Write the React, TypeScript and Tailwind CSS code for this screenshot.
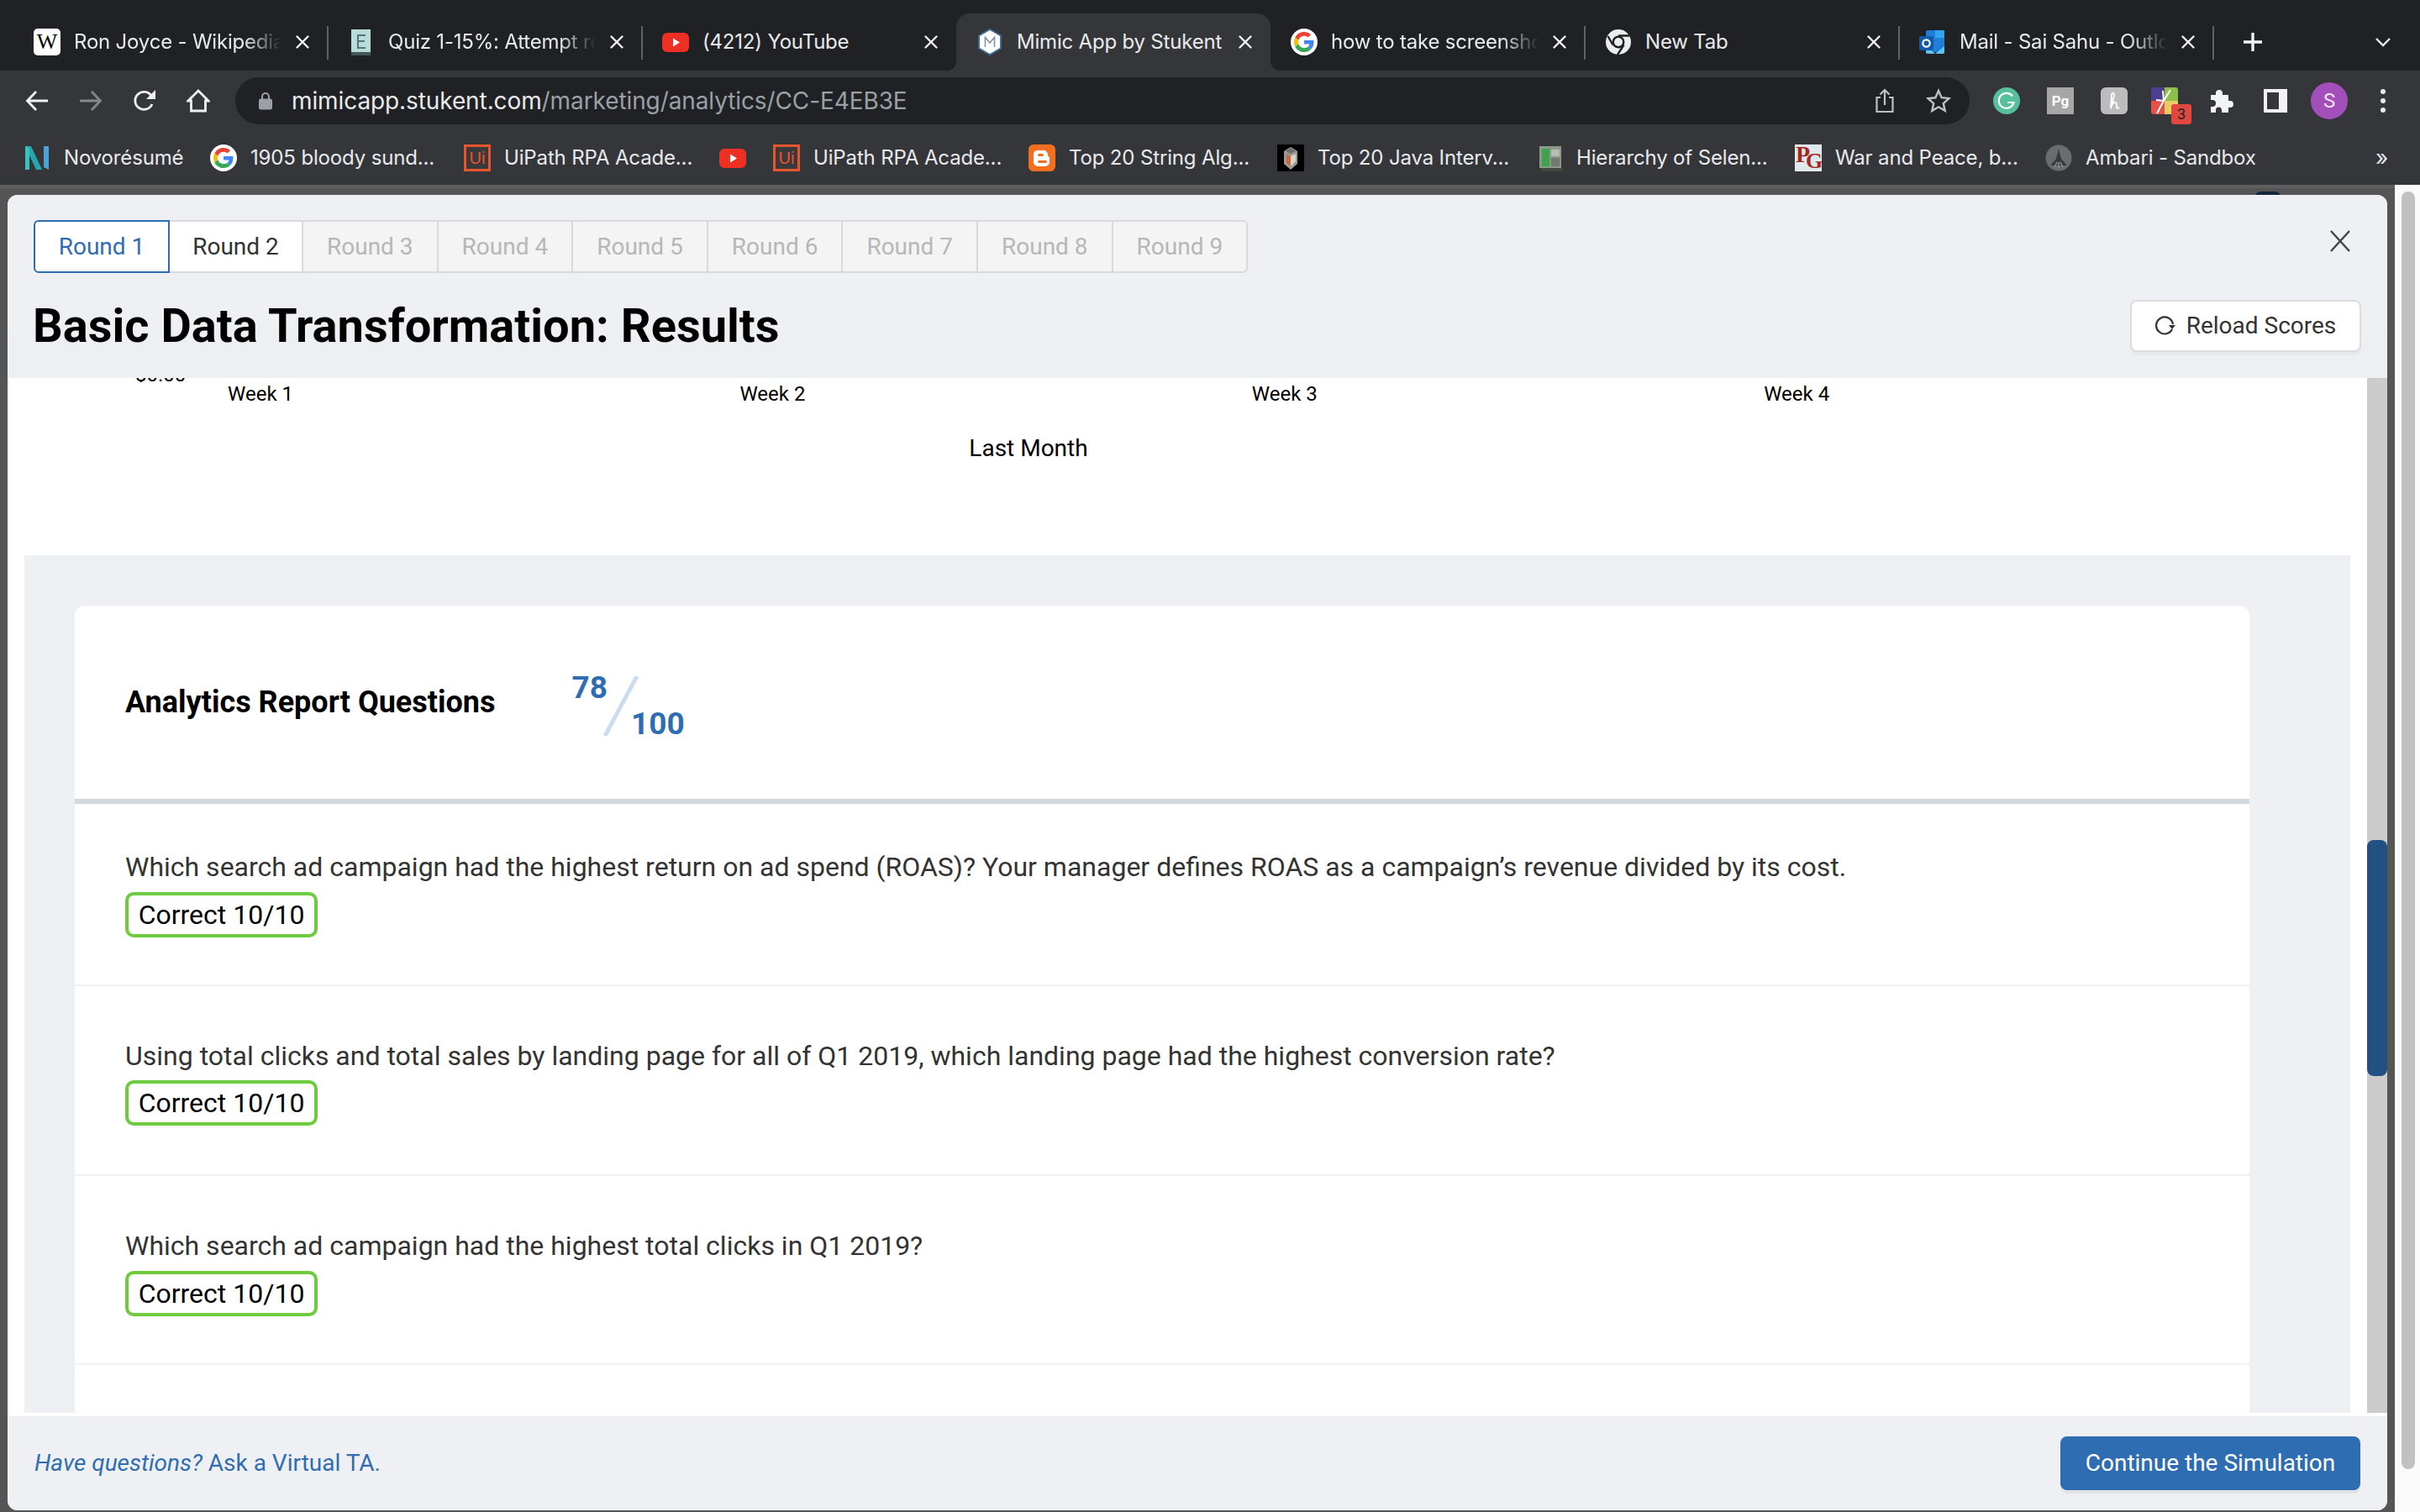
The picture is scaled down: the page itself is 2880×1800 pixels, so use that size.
import React from "react";

const GoogleG = ({ size = 24 }: { size?: number }) => (
  <svg width={size} height={size} viewBox="0 0 48 48">
    <path fill="#EA4335" d="M24 9.5c3.54 0 6.71 1.22 9.21 3.6l6.85-6.85C35.9 2.38 30.47 0 24 0 14.62 0 6.51 5.38 2.56 13.22l7.98 6.19C12.43 13.72 17.74 9.5 24 9.5z" />
    <path fill="#4285F4" d="M46.98 24.55c0-1.57-.15-3.09-.38-4.55H24v9.02h12.94c-.58 2.96-2.26 5.48-4.78 7.18l7.73 6c4.51-4.18 7.09-10.36 7.09-17.65z" />
    <path fill="#FBBC05" d="M10.53 28.59c-.48-1.45-.76-2.99-.76-4.59s.27-3.14.76-4.59l-7.98-6.19C.92 16.46 0 20.12 0 24c0 3.88.92 7.54 2.56 10.78l7.97-6.19z" />
    <path fill="#34A853" d="M24 48c6.48 0 11.93-2.13 15.89-5.81l-7.73-6c-2.15 1.45-4.92 2.3-8.16 2.3-6.26 0-11.57-4.22-13.47-9.91l-7.98 6.19C6.51 42.62 14.62 48 24 48z" />
  </svg>
);
const GoogleFav = () => (
  <div className="w-[32px] h-[32px] rounded-full bg-white flex items-center justify-center shrink-0"><GoogleG size={24} /></div>
);
const YouTubeFav = () => (
  <svg width="32" height="32" viewBox="0 0 32 32" className="shrink-0">
    <rect x="0" y="5" width="32" height="23" rx="6" fill="#ee3024" />
    <path d="M13 11.5l8 5-8 5z" fill="#fff" />
  </svg>
);
const WikiFav = () => (
  <div className="w-[32px] h-[32px] rounded-[5px] bg-white flex items-center justify-center shrink-0 text-black text-[26px] leading-none font-['Liberation_Serif',serif]">W</div>
);
const QuizFav = () => (
  <svg width="32" height="32" viewBox="0 0 32 32" className="shrink-0">
    <rect x="4" y="1" width="23" height="29" fill="#b9dcd9" />
    <rect x="4" y="28" width="23" height="4" fill="#44565a" />
    <path d="M11 7h10v2h-8v5h7v2h-7v6h8v2H11z" fill="#53757a" />
  </svg>
);
const MimicFav = () => (
  <svg width="30" height="32" viewBox="0 0 30 32" className="shrink-0">
    <path d="M15 1l13 7.5v15L15 31 2 23.5v-15z" fill="#fff" stroke="#3e6d92" strokeWidth="2" />
    <path d="M9.5 22V10.5L15 17l5.5-6.5V22" fill="none" stroke="#7f93a6" strokeWidth="1.6" />
  </svg>
);
const ChromeFav = () => (
  <svg width="32" height="32" viewBox="0 0 32 32" className="shrink-0">
    <circle cx="16" cy="16" r="15" fill="#eceded" />
    <circle cx="16" cy="16" r="7.5" fill="#202124" />
    <circle cx="16" cy="16" r="5" fill="#eceded" />
    <path d="M16 8.5h13M9.5 19.5L3.5 9M22.5 19.5L15 31" stroke="#202124" strokeWidth="2.4" />
  </svg>
);
const OutlookFav = () => (
  <svg width="32" height="32" viewBox="0 0 32 32" className="shrink-0">
    <rect x="8" y="2" width="22" height="26" rx="2" fill="#1f7fd6" />
    <path d="M19 2h11v9H19z" fill="#33a4ea" />
    <path d="M8 20l11 10 11-9v7a2 2 0 01-2 2H10a2 2 0 01-2-2z" fill="#60c3f5" />
    <rect x="0" y="9" width="17" height="17" rx="2" fill="#1258ac" />
    <circle cx="8.5" cy="17.5" r="4.2" fill="none" stroke="#fff" strokeWidth="2.2" />
  </svg>
);
const CloseX = ({ className = "" }: { className?: string }) => (
  <svg width="20" height="20" viewBox="0 0 20 20" className={"shrink-0 " + className}>
    <path d="M3.5 3.5l13 13M16.5 3.5l-13 13" stroke="#f1f3f4" strokeWidth="2.4" strokeLinecap="round" />
  </svg>
);

const tabs = [
  { t: "Ron Joyce - Wikipedia", i: <WikiFav />, fade: true, sep: true },
  { t: "Quiz 1-15%: Attempt review", i: <QuizFav />, fade: true, sep: true },
  { t: "(4212) YouTube", i: <YouTubeFav />, fade: false, sep: false },
  { t: "Mimic App by Stukent", i: <MimicFav />, fade: false, sep: false, active: true },
  { t: "how to take screenshot", i: <GoogleFav />, fade: true, sep: true },
  { t: "New Tab", i: <ChromeFav />, fade: false, sep: true },
  { t: "Mail - Sai Sahu - Outlook", i: <OutlookFav />, fade: true, sep: true },
];

const ChromeTab = ({ tab }: { tab: (typeof tabs)[number] }) => (
  <div className={"relative w-[374px] h-[68px] shrink-0 flex items-center pl-[24px] " + (tab.active ? "bg-[#35363a] rounded-t-[16px]" : "")}>
    {tab.active && (
      <>
        <span className="absolute bottom-0 left-[-12px] w-[12px] h-[12px] bg-[radial-gradient(circle_at_0_0,transparent_12px,#35363a_12.5px)]" />
        <span className="absolute bottom-0 right-[-12px] w-[12px] h-[12px] bg-[radial-gradient(circle_at_100%_0,transparent_12px,#35363a_12.5px)]" />
      </>
    )}
    <div className="w-[32px] flex justify-center shrink-0">{tab.i}</div>
    <div className={"ml-[16px] w-[247px] overflow-hidden whitespace-nowrap text-[#e8eaed] text-[24px] leading-[32px] font-['Inter',sans-serif] tracking-[-0.2px] " + (tab.fade ? "[mask-image:linear-gradient(to_right,black_82%,transparent_100%)]" : "")}>
      {tab.t}
    </div>
    <CloseX className="ml-[15px]" />
    {tab.sep && <span className="absolute right-[-1px] top-[15px] h-[40px] w-[2px] bg-[#5f6368]" />}
  </div>
);

const ToolBtn = ({ children }: { children: React.ReactNode }) => (
  <div className="w-[64px] h-[64px] shrink-0 flex items-center justify-center relative">{children}</div>
);

const UiFav = () => (
  <div className="w-[32px] h-[32px] border-[3px] border-[#e9552c] bg-[#3a3a3c] flex items-center justify-center shrink-0 text-[#e9552c] text-[20px] leading-none font-['Liberation_Sans',sans-serif]">Ui</div>
);
const Bm = ({ icon, text, cls }: { icon: React.ReactNode; text?: string; cls: string }) => (
  <div className={"flex items-center shrink-0 " + cls}>
    {icon}
    {text && <span className="ml-[16px] whitespace-nowrap text-[#e8eaed] text-[24px] leading-[32px] font-['Inter',sans-serif] tracking-[-0.15px]">{text}</span>}
  </div>
);

const NovoIcon = () => (
  <svg width="32" height="32" viewBox="0 0 32 32" className="shrink-0">
    <path d="M2 2h7l13 28h-7z" fill="#27a7ad" />
    <path d="M2 2l5 3v25H2z" fill="#39c3bf" />
    <path d="M24 2h6v28l-6-3z" fill="#4aa3d6" />
  </svg>
);
const BloggerFav = () => (
  <svg width="32" height="32" viewBox="0 0 32 32" className="shrink-0">
    <rect width="32" height="32" rx="6" fill="#f26f21" />
    <path d="M10 7h8a5 5 0 015 5v1a2 2 0 002 2v6a5 5 0 01-5 5h-9a5 5 0 01-5-5v-9a5 5 0 014-5z" fill="#fff" />
    <rect x="11" y="11" width="7" height="3" rx="1.5" fill="#f26f21" />
    <rect x="11" y="19" width="11" height="3" rx="1.5" fill="#f26f21" />
  </svg>
);
const JavaFav = () => (
  <svg width="32" height="32" viewBox="0 0 32 32" className="shrink-0">
    <rect width="32" height="32" fill="#000" />
    <path d="M16 3l8 5v15l-8 7-8-7V8z" fill="#9a9a98" />
    <path d="M11 11l5 3v12l-5-4z" fill="#c76a42" />
    <path d="M16 14l6-3v9l-6 6z" fill="#d8d4cc" />
    <path d="M16 4l6 4-6 3-6-3z" fill="#6f6f6d" />
  </svg>
);
const HierFav = () => (
  <svg width="30" height="32" viewBox="0 0 30 32" className="shrink-0">
    <rect x="2" y="2" width="26" height="26" fill="#8b9a88" />
    <rect x="5" y="5" width="9" height="21" fill="#3fa34d" />
    <rect x="16" y="6" width="10" height="8" fill="#b6bdb3" />
    <rect x="16" y="16" width="10" height="10" fill="#707a6f" />
    <rect x="4" y="28" width="26" height="4" fill="#44473f" />
  </svg>
);
const PgFav = () => (
  <div className="w-[32px] h-[32px] bg-[#dfe9ee] shrink-0 relative overflow-hidden font-['Liberation_Serif',serif] text-[#a3281f] font-bold">
    <span className="absolute left-[1px] top-[-3px] text-[28px] leading-[30px]">P</span>
    <span className="absolute left-[13px] top-[6px] text-[26px] leading-[28px]">G</span>
  </div>
);
const AmbariFav = () => (
  <svg width="32" height="32" viewBox="0 0 32 32" className="shrink-0">
    <circle cx="16" cy="16" r="15.5" fill="#6b6c6e" />
    <path d="M16 5l3 12 7 8H6l7-8z" fill="#38393b" />
    <path d="M11 27l3-6M16 28v-7M21 27l-3-6" stroke="#8d8e90" strokeWidth="1.6" />
  </svg>
);

const rounds = ["Round 1", "Round 2", "Round 3", "Round 4", "Round 5", "Round 6", "Round 7", "Round 8", "Round 9"];

const Badge = () => (
  <div className="w-[229px] h-[54px] border-[4px] border-[#6ecb3f] rounded-[10px] flex items-center justify-center text-black text-[32px] leading-none">
    Correct 10/10
  </div>
);

const Question = ({ text, cls, badgeCls }: { text: string; cls: string; badgeCls: string }) => (
  <div className={"border-b-[2px] border-[#f0f1f3] pl-[60px] " + cls}>
    <div className="text-[#333] text-[32px] leading-[44px] whitespace-nowrap">{text}</div>
    <div className={badgeCls}><Badge /></div>
  </div>
);

export default function App() {
  return (
    <div className="w-[2880px] h-[1800px] overflow-hidden flex flex-col bg-[#555] font-['Roboto',sans-serif]">
      {/* Tab strip */}
      <div className="h-[84px] shrink-0 bg-[#202124] flex items-end pl-[16px]">
        {tabs.map((t) => (
          <ChromeTab key={t.t} tab={t} />
        ))}
        <div className="h-[68px] flex items-center ml-[34px]">
          <svg width="26" height="26" viewBox="0 0 26 26"><path d="M13 2v22M2 13h22" stroke="#f1f3f4" strokeWidth="3.4" /></svg>
        </div>
        <div className="h-[68px] flex items-center ml-[132px]">
          <svg width="20" height="12" viewBox="0 0 20 12"><path d="M2 2l8 8 8-8" fill="none" stroke="#e8eaed" strokeWidth="2.4" /></svg>
        </div>
      </div>
      {/* Toolbar */}
      <div className="h-[72px] shrink-0 bg-[#35363a] flex items-center pl-[12px]">
        <ToolBtn>
          <svg width="28" height="28" viewBox="0 0 28 28"><path d="M27 14H3M13 3L2.5 14 13 25" fill="none" stroke="#eef0f1" strokeWidth="2.8" /></svg>
        </ToolBtn>
        <ToolBtn>
          <svg width="28" height="28" viewBox="0 0 28 28"><path d="M1 14h24M15 3l10.5 11L15 25" fill="none" stroke="#85878a" strokeWidth="2.8" /></svg>
        </ToolBtn>
        <ToolBtn>
          <svg width="28" height="28" viewBox="0 0 28 28"><path d="M23 18a10.5 10.5 0 11-.6-9.5" fill="none" stroke="#eef0f1" strokeWidth="2.8" /><path d="M27 1v11H16z" fill="#eef0f1" /></svg>
        </ToolBtn>
        <ToolBtn>
          <svg width="28" height="28" viewBox="0 0 28 28"><path d="M14 2L2 14h3.5v12h17V14H26z" fill="none" stroke="#eef0f1" strokeWidth="2.8" /></svg>
        </ToolBtn>
        <div className="ml-[12px] w-[2064px] h-[56px] rounded-full bg-[#202124] flex items-center pl-[28px] pr-[5px]">
          <svg width="16" height="22" viewBox="0 0 16 22" className="shrink-0"><path d="M4 9V6a4 4 0 018 0v3" fill="none" stroke="#9aa0a6" strokeWidth="2" /><rect y="8.5" width="16" height="13" rx="2.5" fill="#9aa0a6" /></svg>
          <div className="ml-[23px] flex-1 text-[28px] leading-[36px] whitespace-nowrap font-['Inter',sans-serif] tracking-[-0.1px] text-[#e8eaed]">
            mimicapp.stukent.com<span className="text-[#9aa0a6]">/marketing/analytics/CC-E4EB3E</span>
          </div>
          <div className="flex">
            <ToolBtn>
              <svg width="24" height="30" viewBox="0 0 24 30"><path d="M7 11H2.5v17h19V11H17M12 20V2M6.5 7.5L12 2l5.5 5.5" fill="none" stroke="#bdc1c6" strokeWidth="2.2" /></svg>
            </ToolBtn>
            <ToolBtn>
              <svg width="30" height="30" viewBox="0 0 30 30"><path d="M15 3l3.6 8.2 8.9.9-6.7 6 1.9 8.8L15 22.3 7.3 27l1.9-8.8-6.7-6 8.9-.9z" fill="none" stroke="#bdc1c6" strokeWidth="2.4" /></svg>
            </ToolBtn>
          </div>
        </div>
        <div className="ml-[12px] flex">
          <ToolBtn>
            <div className="w-[32px] h-[32px] rounded-full bg-[#56c09c] flex items-center justify-center">
              <svg width="22" height="22" viewBox="0 0 22 22"><path d="M18 5.5A9 9 0 1019.5 13H12" fill="none" stroke="#fff" strokeWidth="2.2" /></svg>
            </div>
          </ToolBtn>
          <ToolBtn>
            <div className="w-[32px] h-[32px] bg-[#a6a6a6] flex items-center justify-center text-white text-[17px] font-bold leading-none">Pg</div>
          </ToolBtn>
          <ToolBtn>
            <div className="w-[32px] h-[32px] rounded-[6px] bg-[#bcbcbc] flex items-center justify-center">
              <svg width="20" height="24" viewBox="0 0 20 24"><path d="M6 21c1-6 4-12 4-16 0-3-3-3-3 0 0 5-1 11-1 16 1-5 4-8 6-7s0 5 1 6 2 1 3 0" fill="none" stroke="#fff" strokeWidth="1.8" /></svg>
            </div>
          </ToolBtn>
          <ToolBtn>
            <div className="relative w-[32px] h-[32px] rounded-[3px] overflow-hidden left-[-4px]">
              <svg width="32" height="32" viewBox="0 0 32 32">
                <rect width="16" height="16" fill="#4d3f8f" />
                <rect x="16" width="16" height="16" fill="#8cc04b" />
                <rect y="16" width="16" height="16" fill="#e4524a" />
                <rect x="16" y="16" width="16" height="16" fill="#e9cd60" />
                <path d="M15 16L6 15M15 16l-1-12M15 16l8-13M15 16L7 31" stroke="#fff" strokeWidth="2" />
              </svg>
            </div>
            <div className="absolute left-[36px] top-[36px] w-[24px] h-[24px] rounded-[3px] bg-[#e0483f] flex items-center justify-center text-[#222] text-[18px] leading-none">3</div>
          </ToolBtn>
          <ToolBtn>
            <svg width="30" height="30" viewBox="0 0 30 30"><path d="M2 8h6V6a4 4 0 018 0v2h7v7h2a4 4 0 010 8h-2v6H15v-3a3.5 3.5 0 00-7 0v3H2v-7h2a4 4 0 000-8H2z" fill="#f1f3f4" /></svg>
          </ToolBtn>
          <ToolBtn>
            <div className="w-[28px] h-[28px] border-[4px] border-r-[10px] border-[#f1f3f4]" />
          </ToolBtn>
          <ToolBtn>
            <div className="w-[44px] h-[44px] rounded-full bg-[#a34fbb] flex items-center justify-center text-[#f1e4f5] text-[24px] leading-none">S</div>
          </ToolBtn>
          <ToolBtn>
            <div className="flex flex-col gap-[5px]">
              <span className="w-[6px] h-[6px] rounded-full bg-[#e8eaed]" />
              <span className="w-[6px] h-[6px] rounded-full bg-[#e8eaed]" />
              <span className="w-[6px] h-[6px] rounded-full bg-[#e8eaed]" />
            </div>
          </ToolBtn>
        </div>
      </div>
      {/* Bookmarks */}
      <div className="h-[64px] shrink-0 bg-[#35363a] flex items-center pl-[28px]">
        <Bm cls="w-[222px]" icon={<NovoIcon />} text="Novorésumé" />
        <Bm cls="w-[302px]" icon={<GoogleFav />} text="1905 bloody sund..." />
        <Bm cls="w-[304px]" icon={<UiFav />} text="UiPath RPA Acade..." />
        <Bm cls="w-[64px]" icon={<YouTubeFav />} />
        <Bm cls="w-[304px]" icon={<UiFav />} text="UiPath RPA Acade..." />
        <Bm cls="w-[296px]" icon={<BloggerFav />} text="Top 20 String Alg..." />
        <Bm cls="w-[310px]" icon={<JavaFav />} text="Top 20 Java Interv..." />
        <Bm cls="w-[306px]" icon={<HierFav />} text="Hierarchy of Selen..." />
        <Bm cls="w-[298px]" icon={<PgFav />} text="War and Peace, b..." />
        <Bm cls="w-[393px]" icon={<AmbariFav />} text="Ambari - Sandbox" />
        <span className="text-[#e8eaed] text-[26px] leading-none font-['Inter',sans-serif]">»</span>
      </div>

      {/* Page */}
      <div className="flex-1 min-h-0 flex">
        <div className="w-[2850px] h-full bg-[#555] border-t-[4px] border-[#5e5f61] pt-[8px] pl-[9px] relative">
          <div className="absolute left-[2683px] top-[4px] w-[32px] h-[8px] rounded-t-full bg-[#14253f]" />
          <div className="relative w-[2832px] h-[1566px] rounded-[12px] overflow-hidden flex flex-col bg-white">
            {/* Modal header */}
            <div className="h-[218px] shrink-0 bg-gradient-to-b from-[#eff0f4] to-[#edf0f3] pl-[31px] pt-[30px] pr-[31px] flex flex-col">
              <div className="flex justify-between">
                <div className="flex h-[63px]">
                  {rounds.map((r, i) => (
                    <div
                      key={r}
                      className={
                        "flex items-center justify-center text-[28px] leading-none " +
                        (i === 0
                          ? "w-[162px] bg-white border-[2px] border-[#2f6db3] rounded-l-[6px] text-[#2f6db3]"
                          : i === 1
                          ? "w-[159px] bg-white border-y-[2px] border-r-[2px] border-[#dadada] text-[#333]"
                          : "w-[160.6px] bg-[#f4f4f4] border-y-[2px] border-r-[2px] border-[#dadada] text-[#b7b7b7] " + (i === 8 ? "rounded-r-[6px]" : ""))
                      }
                    >
                      {r}
                    </div>
                  ))}
                </div>
                <svg width="26" height="26" viewBox="0 0 26 26" className="mt-[12px] mr-[12px]">
                  <path d="M2 1l22 24M24 1L2 25" stroke="#444" strokeWidth="2.4" />
                </svg>
              </div>
              <div className="flex justify-between items-start mt-[32px]">
                <h1 className="text-[#000] text-[56px] leading-[62px] font-bold -ml-[1px] whitespace-nowrap">Basic Data Transformation: Results</h1>
                <div className="w-[275px] h-[62px] bg-white border-[2px] border-[#dcdcdf] rounded-[8px] shadow-[0_4px_0_#e6e8ec] flex items-center justify-center gap-[13px] text-[#333] text-[28px] leading-none">
                  <svg width="24" height="24" viewBox="0 0 24 24">
                    <path d="M21 10A10 10 0 104.5 19 10 10 0 0020 16" fill="none" stroke="#333" strokeWidth="2.2" />
                    <path d="M16 11h8l-4 5z" fill="#333" />
                  </svg>
                  Reload Scores
                </div>
              </div>
            </div>

            {/* Content */}
            <div className="h-[1232px] shrink-0 flex bg-white">
              <div className="w-[2808px] overflow-hidden">
                <div className="h-[211px] overflow-hidden">
                  <div className="h-[5px] overflow-hidden pl-[152px]">
                    <div className="-mt-[18px] text-[24px] leading-[28px] text-black">$0.00</div>
                  </div>
                  <div className="flex pl-[262px] text-[24px] leading-[28px] text-black h-[28px]">
                    <div className="w-[609.4px]">Week 1</div>
                    <div className="w-[609.4px]">Week 2</div>
                    <div className="w-[609.4px]">Week 3</div>
                    <div className="w-[609.4px]">Week 4</div>
                  </div>
                  <div className="w-[2430px] text-center text-[28px] leading-[36px] text-black mt-[33px]">Last Month</div>
                </div>
                <div className="ml-[20px] w-[2768px] h-[1021px] bg-[#eff0f4] pl-[60px] pt-[60px] overflow-hidden">
                  <div className="w-[2588px] bg-white rounded-t-[12px] h-[1000px]">
                    <div className="h-[230px] border-b-0 flex pl-[60px]">
                      <div className="text-[36px] leading-[44px] font-bold text-black whitespace-nowrap self-start mt-[93px]">Analytics Report Questions</div>
                      <div className="flex ml-[91px] mt-[84px] h-[71px] text-[#2f6db3] text-[37px] leading-[28px] font-bold">
                        <span className="self-start">78</span>
                        <svg width="42" height="71" viewBox="0 0 42 71" className="-ml-[5px] -mr-[9px]">
                          <path d="M40 0L2 71" stroke="#ccdcef" strokeWidth="5" />
                        </svg>
                        <span className="self-end">100</span>
                      </div>
                    </div>
                    <div className="h-[6px] bg-[#d0d8e1]" />
                    <Question
                      cls="h-[217px] pt-[53px]"
                      badgeCls="mt-[8px]"
                      text="Which search ad campaign had the highest return on ad spend (ROAS)? Your manager defines ROAS as a campaign’s revenue divided by its cost."
                    />
                    <Question
                      cls="h-[225.5px] pt-[61px]"
                      badgeCls="mt-[7px]"
                      text="Using total clicks and total sales by landing page for all of Q1 2019, which landing page had the highest conversion rate?"
                    />
                    <Question
                      cls="h-[225.5px] pt-[61px]"
                      badgeCls="mt-[8px]"
                      text="Which search ad campaign had the highest total clicks in Q1 2019?"
                    />
                  </div>
                </div>
              </div>
              <div className="w-[24px] h-full bg-[#cccccc] pt-[550px] shrink-0">
                <div className="w-[24px] h-[281px] rounded-[8px] bg-[#215083]" />
              </div>
            </div>
            <div className="h-[4px] shrink-0 bg-white" />

            {/* Footer */}
            <div className="h-[112px] shrink-0 bg-[#eff0f4] flex items-center justify-between pl-[32px] pr-[32px] pb-[1px]">
              <div className="text-[#2f6db3] text-[28px] leading-[36px]">
                <i>Have questions?</i> Ask a Virtual TA.
              </div>
              <div className="w-[357px] h-[64px] rounded-[8px] bg-[#2f6db3] shadow-[0_4px_0_#e1e3e9] flex items-center justify-center text-white text-[28px] leading-none">
                Continue the Simulation
              </div>
            </div>
          </div>
        </div>
        {/* page scrollbar */}
        <div className="w-[30px] h-full bg-[#fafafa] pl-[8px] pt-[8px]">
          <div className="w-[16px] h-[1521px] rounded-full bg-[#c1c1c1]" />
        </div>
      </div>
    </div>
  );
}
